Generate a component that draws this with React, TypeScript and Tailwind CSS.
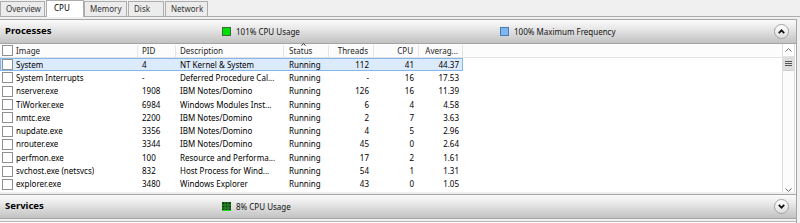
import React from 'react';

const rows = [
  ['System', '4', 'NT Kernel & System', 'Running', '112', '41', '44.37'],
  ['System Interrupts', '-', 'Deferred Procedure Cal...', 'Running', '-', '16', '17.53'],
  ['nserver.exe', '1908', 'IBM Notes/Domino', 'Running', '126', '16', '11.39'],
  ['TiWorker.exe', '6984', 'Windows Modules Inst...', 'Running', '6', '4', '4.58'],
  ['nmtc.exe', '2200', 'IBM Notes/Domino', 'Running', '2', '7', '3.63'],
  ['nupdate.exe', '3356', 'IBM Notes/Domino', 'Running', '4', '5', '2.96'],
  ['nrouter.exe', '3344', 'IBM Notes/Domino', 'Running', '45', '0', '2.64'],
  ['perfmon.exe', '100', 'Resource and Performa...', 'Running', '17', '2', '1.61'],
  ['svchost.exe (netsvcs)', '832', 'Host Process for Wind...', 'Running', '54', '1', '1.31'],
  ['explorer.exe', '3480', 'Windows Explorer', 'Running', '43', '0', '1.05'],
];

const tabs = ['Overview', 'CPU', 'Memory', 'Disk', 'Network'];
const tabWidths = ['w-[45px]', 'w-[38px]', 'w-[43px]', 'w-[36px]', 'w-[43px]'];

function Check() {
  return <span className="ml-[2px] mr-[3px] h-[11px] w-[11px] shrink-0 border border-[#8f8f8f] bg-white" />;
}

function RoundButton({ up }: { up: boolean }) {
  return (
    <span className="flex h-[15px] w-[15px] items-center justify-center rounded-full border border-[#a3a3a3] bg-[linear-gradient(to_bottom,#ffffff,#dedede)]">
      <svg width="7" height="5" viewBox="0 0 7 5">
        <path
          d={up ? 'M0.8 4.2 L3.5 1.3 L6.2 4.2' : 'M0.8 0.8 L3.5 3.7 L6.2 0.8'}
          fill="none"
          stroke="#111"
          strokeWidth="1.7"
        />
      </svg>
    </span>
  );
}

function SectionHeader({
  title,
  children,
  up,
  h,
}: {
  title: string;
  children?: React.ReactNode;
  up: boolean;
  h: string;
}) {
  return (
    <div
      className={`${h} flex items-center border-t border-b border-[#a5a5a5] bg-[linear-gradient(to_bottom,#fbfbfb,#e9e9e9_35%,#c2c2c2)] pl-[5px] pr-[7px]`}
    >
      <span className="w-[217px] text-[9.5px] font-bold text-black">{title}</span>
      {children}
      <span className="ml-auto">
        <RoundButton up={up} />
      </span>
    </div>
  );
}

export default function App() {
  return (
    <div
      className="h-[223px] w-[800px] overflow-hidden bg-[#f0f0f0] text-[8px] text-black"
      style={{ fontFamily: '"Segoe UI", "Noto Sans", sans-serif' }}
    >
      {/* tab strip */}
      <div className="flex h-[17px] items-end border-b border-[#adadad]">
        {tabs.map((t, i) =>
          t === 'CPU' ? (
            <div
              key={t}
              className={`${tabWidths[i]} -mb-px flex h-[17px] items-start border-x border-t border-[#adadad] bg-white pl-[7px] pt-[1px] text-black`}
            >
              {t}
            </div>
          ) : (
            <div
              key={t}
              className={`${tabWidths[i]} mr-[1px] flex h-[15px] items-center border-x border-t border-[#adadad] bg-[#ececec] pl-[5px] text-[#333]`}
            >
              {t}
            </div>
          )
        )}
      </div>

      <div className="mt-[2px] mr-[3px] border-r border-[#a5a5a5]">
        <SectionHeader title="Processes" up h="h-[25px]">
          <span className="mr-[5px] h-[9px] w-[9px] border border-[#3b6e3b] bg-[#00e000]" />
          <span className="w-[264px] text-[#111]">101% CPU Usage</span>
          <span className="mr-[5px] h-[9px] w-[9px] border border-[#4a7bb0] bg-[#7db7f2]" />
          <span className="text-[#111]">100% Maximum Frequency</span>
        </SectionHeader>

        <div className="flex h-[148px] bg-white">
          <div className="flex-1">
            {/* column header */}
            <div className="flex h-[14px] items-center border-b border-[#e3e3e3] bg-[#fcfcfc] text-[#1e1e1e]">
              <div className="flex w-[138px] items-center border-r border-[#e5e5e5]">
                <Check />
                <span>Image</span>
              </div>
              <div className="w-[38px] border-r border-[#e5e5e5] pl-[4px]">PID</div>
              <div className="w-[108px] border-r border-[#e5e5e5] pl-[4px]">Description</div>
              <div className="relative w-[45px] border-r border-[#e5e5e5] pl-[5px]">
                Status
                <svg className="absolute left-[17px] top-[-2px]" width="5" height="3" viewBox="0 0 5 3">
                  <path d="M0.5 2.7 L2.5 0.5 L4.5 2.7" fill="none" stroke="#333" strokeWidth="1" />
                </svg>
              </div>
              <div className="w-[45px] border-r border-[#e5e5e5] pr-[5px] text-right">Threads</div>
              <div className="w-[45px] border-r border-[#e5e5e5] pr-[5px] text-right">CPU</div>
              <div className="w-[44px] border-r border-[#e5e5e5] pr-[4px] text-right">Averag...</div>
            </div>

            {rows.map((r, i) => (
              <div
                key={r[0]}
                className={`flex h-[13.3px] w-[463px] items-center ${
                  i === 0 ? 'border border-[#86b6e8] bg-[#dcebfb]' : 'border border-transparent'
                }`}
              >
                <div className="-ml-px flex w-[138px] items-center">
                  <Check />
                  <span className="truncate">{r[0]}</span>
                </div>
                <div className="w-[38px] pl-[4px]">{r[1]}</div>
                <div className="w-[108px] truncate pl-[4px]">{r[2]}</div>
                <div className="w-[45px] pl-[5px]">{r[3]}</div>
                <div className="w-[45px] pr-[5px] text-right">{r[4]}</div>
                <div className="w-[45px] pr-[5px] text-right">{r[5]}</div>
                <div className="w-[43px] pr-[3px] text-right">{r[6]}</div>
              </div>
            ))}
          </div>

          {/* scrollbar */}
          <div className="mr-[1px] flex w-[13px] flex-col border-x border-[#dcdcdc] bg-[#fcfcfc]">
            <div className="flex h-[13px] items-center justify-center border-b border-[#e2e2e2] bg-white">
              <svg width="7" height="4" viewBox="0 0 7 4">
                <path d="M0.5 3.5 L3.5 0.7 L6.5 3.5" fill="none" stroke="#6b6b6b" strokeWidth="1" />
              </svg>
            </div>
            <div className="flex h-[14px] flex-col items-center justify-center gap-[1px] border-b border-[#cfcfcf] bg-[#dedede]">
              <span className="h-[1px] w-[7px] bg-[#555]" />
              <span className="h-[1px] w-[7px] bg-[#555]" />
              <span className="h-[1px] w-[7px] bg-[#555]" />
            </div>
            <div className="flex-1" />
            <div className="flex h-[8px] items-end justify-center">
              <svg width="7" height="4" viewBox="0 0 7 4">
                <path d="M0.5 0.5 L3.5 3.3 L6.5 0.5" fill="none" stroke="#6b6b6b" strokeWidth="1" />
              </svg>
            </div>
          </div>
        </div>

        <div className="h-[2px] bg-[#f0f0f0]" />

        <SectionHeader title="Services" up={false} h="h-[25px]">
          <svg className="mr-[5px]" width="9" height="9" viewBox="0 0 9 9">
            <rect x="0" y="0" width="9" height="9" fill="#0c4a0c" />
            <path d="M3 0 V9 M6 0 V9 M0 3 H9 M0 6 H9" stroke="#2f8f2f" strokeWidth="1" />
            <rect x="0" y="8" width="9" height="1" fill="#22dd22" />
          </svg>
          <span className="text-[#111]">8% CPU Usage</span>
        </SectionHeader>

        <div className="h-[2px] bg-[#f0f0f0]" />
        <div className="h-[10px] border-t border-[#b5b5b5] bg-white" />
      </div>
    </div>
  );
}
